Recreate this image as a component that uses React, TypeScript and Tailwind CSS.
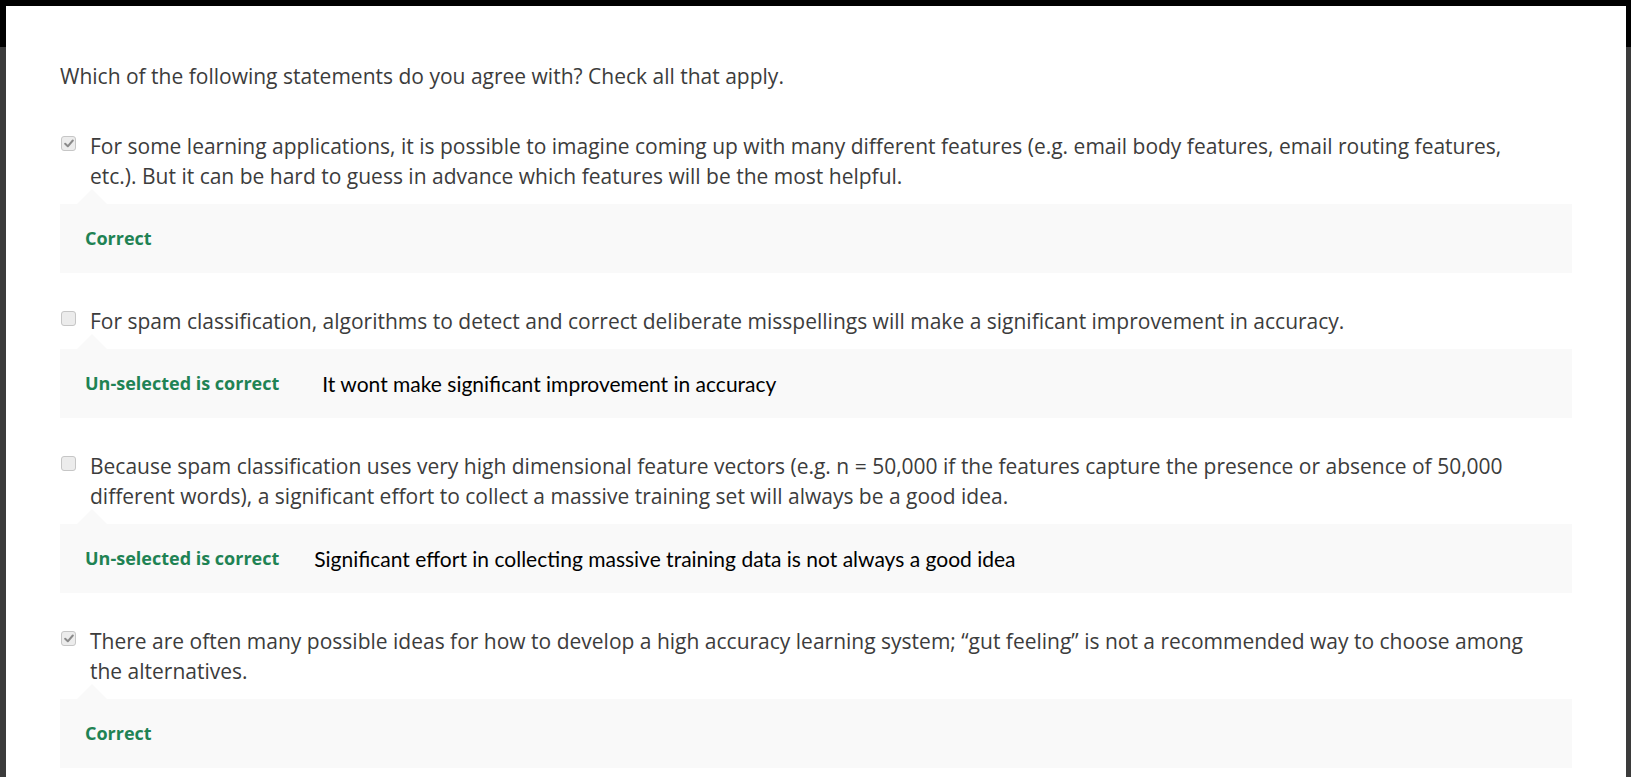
import React from "react";

const items = [
  {
    text: "For some learning applications, it is possible to imagine coming up with many different features (e.g. email body features, email routing features, etc.). But it can be hard to guess in advance which features will be the most helpful.",
    checked: true,
    label: "Correct",
    note: "",
    noteGap: "",
  },
  {
    text: "For spam classification, algorithms to detect and correct deliberate misspellings will make a significant improvement in accuracy.",
    checked: false,
    label: "Un-selected is correct",
    note: "It wont make significant improvement in accuracy",
    noteGap: "ml-[43px]",
  },
  {
    text: "Because spam classification uses very high dimensional feature vectors (e.g. n = 50,000 if the features capture the presence or absence of 50,000 different words), a significant effort to collect a massive training set will always be a good idea.",
    checked: false,
    label: "Un-selected is correct",
    note: "Significant effort in collecting massive training data is not always a good idea",
    noteGap: "ml-[35px]",
  },
  {
    text: "There are often many possible ideas for how to develop a high accuracy learning system; \u201cgut feeling\u201d is not a recommended way to choose among the alternatives.",
    checked: true,
    label: "Correct",
    note: "",
    noteGap: "",
  },
];

const Checkbox = ({ checked }: { checked: boolean }) => (
  <span className="mt-[5px] flex h-[15px] w-[15px] shrink-0 items-center justify-center rounded-[3px] border border-[#c6c6c6] bg-[#ececec]">
    {checked && (
      <svg width="10" height="9" viewBox="0 0 10 9">
        <path d="M1.2 4.8 L3.8 7.3 L8.8 1.5" fill="none" stroke="#8a8a8a" strokeWidth="2" strokeLinecap="round" strokeLinejoin="round" />
      </svg>
    )}
  </span>
);

const App = () => {
  return (
    <div className="flex h-[777px] w-full flex-col overflow-hidden bg-[#3b3b3b]">
      <div className="h-[6px] w-full shrink-0 bg-black" />
      <div className="flex flex-1">
        <div className="w-[6px] shrink-0">
          <div className="h-[41px] bg-black" />
        </div>
        <div className="flex-1 bg-white px-[54px] pt-[55px] font-['Open_Sans',sans-serif] text-[#3c3c3c]">
          <p className="text-[21px] leading-[30px]">
            Which of the following statements do you agree with? Check all that apply.
          </p>
          <div className="mt-[40px] flex flex-col gap-[33px]">
            {items.map((item, i) => (
              <div key={i}>
                <div className="flex">
                  <div className="w-[30px] shrink-0 pl-[1px]">
                    <Checkbox checked={item.checked} />
                  </div>
                  <p className="max-w-[1455px] text-[21px] leading-[30px]">{item.text}</p>
                </div>
                <div className="relative mt-[13px] flex h-[69px] items-center bg-[#f9f9f9] pl-[25px]">
                  <span className="absolute -top-[15px] left-[17px] h-0 w-0 border-x-[15px] border-b-[15px] border-x-transparent border-b-[#f9f9f9]" />
                  <span className="text-[18px] font-bold text-[#1f8354]">{item.label}</span>
                  {item.note && (
                    <span className={`${item.noteGap} font-['Lato',sans-serif] text-[21px] text-black`}>{item.note}</span>
                  )}
                </div>
              </div>
            ))}
          </div>
        </div>
        <div className="w-[5px] shrink-0">
          <div className="h-[41px] bg-black" />
        </div>
      </div>
    </div>
  );
};

export default App;
